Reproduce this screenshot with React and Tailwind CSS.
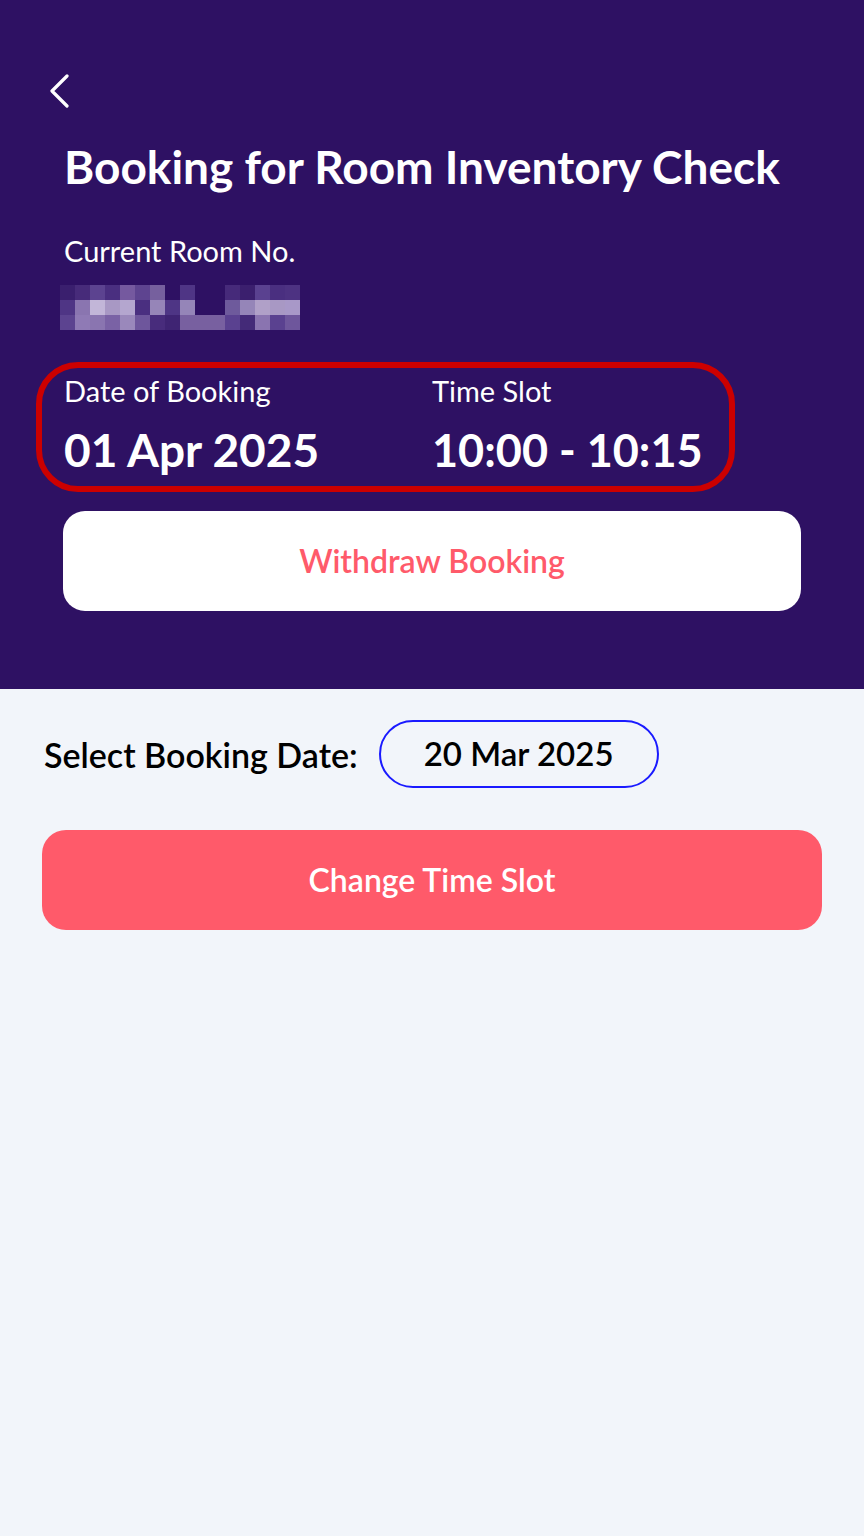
const mosaic = [
  ["#3a1f6e","#472b7a","#5c4390","#4a2f80","#75599f","#5e4490","#76609e","#2e1163","#4f3585","#2e1163","#2e1163","#462a7a","#3b1f6e","#5a4190","#4a2f80","#4d3282"],
  ["#4f3585","#8a75b0","#c2b6d8","#a898c4","#b4a6cf","#4a2f80","#9685b8","#4e3585","#9585b8","#2e1163","#2e1163","#6e5a9c","#9585b8","#b0a0c8","#a898c4","#a898c8"],
  ["#5c4390","#8f7ab5","#8a75b0","#7a62a5","#9a88bb","#6e569c","#482c7c","#3f2473","#7860a0","#7860a0","#7860a0","#5a4190","#442a78","#8a74b0","#5a4190","#6e569c"],
];

export default function App() {
  return (
    <div className="min-h-[1536px] w-full bg-[#f2f5fa] font-['Lato',sans-serif]">
      <div className="h-[689px] bg-[#2e1163] px-[64px] pt-[74px]">
        <button className="-ml-[16px] block h-[34px] w-[24px]">
          <svg width="24" height="34" viewBox="0 0 24 34" fill="none">
            <path d="M19 2 L4 17 L19 32" stroke="white" strokeWidth="3.2" strokeLinecap="round" strokeLinejoin="round" />
          </svg>
        </button>
        <h1 className="mt-[31px] text-[46px] font-bold leading-[56px] text-white whitespace-nowrap">
          Booking for Room Inventory Check
        </h1>
        <div className="mt-[38px] text-[29px] leading-[36px] text-white">Current Room No.</div>
        <div className="mt-[16px] -ml-[4px] flex flex-col">
          {mosaic.map((row, i) => (
            <div key={i} className="flex">
              {row.map((c, j) => (
                <div key={j} className="h-[15px] w-[15px]" style={{ backgroundColor: c }} />
              ))}
            </div>
          ))}
        </div>
        <div className="mt-[32px] -ml-[28px] h-[130px] w-[699px] rounded-[42px] border-[6px] border-[#cc0000] pl-[22px] pt-[5px]">
          <div className="grid grid-cols-[368px_1fr]">
            <div>
              <div className="text-[29px] leading-[36px] text-white">Date of Booking</div>
              <div className="mt-[14px] text-[46px] font-bold leading-[54px] text-white whitespace-nowrap">01 Apr 2025</div>
            </div>
            <div>
              <div className="text-[29px] leading-[36px] text-white">Time Slot</div>
              <div className="mt-[14px] text-[45px] font-bold leading-[54px] text-white whitespace-nowrap">10:00 - 10:15</div>
            </div>
          </div>
        </div>
        <button className="mt-[19px] -ml-[1px] flex h-[100px] w-[738px] items-center justify-center rounded-[22px] bg-white text-[32px] font-semibold text-[#ff5a6a]">
          Withdraw Booking
        </button>
      </div>
      <div className="px-[42px] pt-[31px]">
        <div className="flex items-center">
          <span className="ml-[2px] text-[34px] font-semibold text-black whitespace-nowrap">Select Booking Date:</span>
          <div className="ml-[21px] flex h-[68px] w-[280px] items-center justify-center rounded-full border-2 border-[#1a1aff] text-[33px] font-semibold text-black">
            20 Mar 2025
          </div>
        </div>
        <button className="mt-[42px] flex h-[100px] w-[780px] items-center justify-center rounded-[24px] bg-[#ff5a6a] text-[32px] font-semibold text-white">
          Change Time Slot
        </button>
      </div>
    </div>
  );
}
